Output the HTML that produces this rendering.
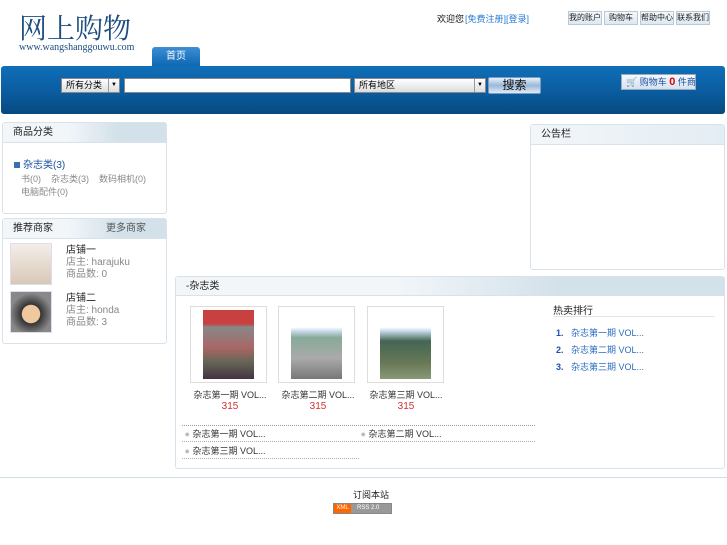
<!DOCTYPE html>
<html><head><meta charset="utf-8"><style>
*{margin:0;padding:0;box-sizing:border-box;white-space:nowrap}
body{width:727px;height:545px;position:relative;background:#fff;font-family:"Liberation Sans","Noto Sans CJK SC",sans-serif;font-size:10px;color:#333;overflow:hidden}
.a{position:absolute}
.btn{position:absolute;top:11px;height:14px;width:34px;border:1px solid #b8c8d8;background:linear-gradient(#f4f8fb,#dde8f0);font-size:8px;text-align:center;line-height:12px;color:#222;overflow:hidden}
.box{position:absolute;border:1px solid #d8e2ea;border-radius:3px;background:#fff}
.hd{height:20px;background:linear-gradient(90deg,#f2f6f9 40%,#d3e1ea 70%);border-bottom:1px solid #d8e2ea;padding-left:10px;line-height:20px;font-size:10px;color:#222}
.g{color:#888}
.dot{border-bottom:1px dotted #aab}
</style></head><body>
<div class="a" style="left:19px;top:10px;font-family:'Noto Serif CJK SC',serif;font-size:28px;color:#1d4d7e;line-height:34px">网上购物</div>
<div class="a" style="left:19px;top:42px;font-family:'Liberation Serif',serif;font-size:10px;color:#1d4d7e">www.wangshanggouwu.com</div>
<div class="a" style="left:437px;top:12px;font-size:9px;color:#111">欢迎您</div>
<div class="a" style="left:465px;top:12px;font-size:9px;color:#2a7ad0">[免费注册]</div>
<div class="a" style="left:506px;top:12px;font-size:9px;color:#2a7ad0">[登录]</div>
<div class="btn" style="left:568px">我的账户</div>
<div class="btn" style="left:604px">购物车</div>
<div class="btn" style="left:640px">帮助中心</div>
<div class="btn" style="left:676px">联系我们</div>
<div class="a" style="left:152px;top:47px;width:48px;height:20px;background:linear-gradient(#3d8ed4,#0b66b0);border-radius:3px 3px 0 0;color:#fff;text-align:center;line-height:20px;font-size:10px">首页</div>
<div class="a" style="left:1px;top:66px;width:724px;height:48px;background:linear-gradient(#0f6fb8,#0a5a9c 60%,#07497f);border-radius:3px"></div>
<div class="a" style="left:61px;top:78px;width:59px;height:15px;background:linear-gradient(#fff,#ddd);border:1px solid #888;font-size:9px;line-height:13px;padding-left:4px;color:#000">所有分类<span style="position:absolute;right:0;top:0;width:11px;height:13px;border-left:1px solid #999;text-align:center;font-size:6px">▼</span></div>
<div class="a" style="left:124px;top:78px;width:227px;height:15px;background:#fff;border:1px solid #888"></div>
<div class="a" style="left:354px;top:78px;width:132px;height:15px;background:linear-gradient(#fff,#ddd);border:1px solid #888;font-size:9px;line-height:13px;padding-left:4px;color:#000">所有地区<span style="position:absolute;right:0;top:0;width:11px;height:13px;border-left:1px solid #999;text-align:center;font-size:6px">▼</span></div>
<div class="a" style="left:488px;top:77px;width:53px;height:17px;background:linear-gradient(#e8f0f8,#9ab8d8 50%,#e0ecf8);border:1px solid #7a9cc0;border-radius:2px;text-align:center;font-size:12px;line-height:15px;color:#111">搜索</div>
<div class="a" style="left:621px;top:74px;width:75px;height:16px;background:linear-gradient(#f4f8fc,#d4e2f0);border:1px solid #9ab;font-size:9px;line-height:14px;color:#1a4fa0;padding-left:4px;overflow:hidden">🛒 购物车 <b style="color:#d00;font-size:11px">0</b> 件商品</div>

<div class="box" style="left:2px;top:122px;width:165px;height:92px">
<div class="hd">商品分类</div>
<div class="a" style="left:11px;top:33px;color:#1a4fa0;font-size:10px"><span style="display:inline-block;width:6px;height:6px;background:#3a70b0;margin-right:3px"></span>杂志类(3)</div>
<div class="a g" style="left:18px;top:49px;font-size:9px">书(0)&nbsp;&nbsp;&nbsp;&nbsp;杂志类(3)&nbsp;&nbsp;&nbsp;&nbsp;数码相机(0)</div>
<div class="a g" style="left:18px;top:62px;font-size:9px">电脑配件(0)</div>
</div>
<div class="box" style="left:2px;top:218px;width:165px;height:126px">
<div class="hd">推荐商家<span style="position:absolute;right:20px;color:#555">更多商家</span></div>
<div class="a" style="left:7px;top:24px;width:42px;height:42px;border:1px solid #dde;background:linear-gradient(#f4eee8,#d8c8b8)"></div>
<div class="a" style="left:63px;top:26px;line-height:12px"><span style="color:#222">店铺一</span><br><span class="g">店主: harajuku</span><br><span class="g">商品数: 0</span></div>
<div class="a" style="left:7px;top:72px;width:42px;height:42px;border:1px solid #dde;background:radial-gradient(circle at 50% 55%,#f0c8a0 30%,#333 32%,#888 70%)"></div>
<div class="a" style="left:63px;top:74px;line-height:12px"><span style="color:#222">店铺二</span><br><span class="g">店主: honda</span><br><span class="g">商品数: 3</span></div>
</div>
<div class="box" style="left:530px;top:124px;width:195px;height:146px"><div class="hd" style="background:linear-gradient(90deg,#f2f6f9,#e4edf3)">公告栏</div></div>

<div class="box" style="left:175px;top:276px;width:550px;height:193px">
<div class="hd" style="height:19px">-杂志类</div>
<div class="a" style="left:14px;top:29px;width:77px;height:77px;border:1px solid #e0dcd8;padding:3px 12px"><div style="width:100%;height:100%;background:linear-gradient(#c84040 20%,#888 25%,#a66 55%,#665 75%,#434 100%)"></div></div>
<div class="a" style="left:102px;top:29px;width:77px;height:77px;border:1px solid #e0dcd8;padding:3px 12px"><div style="width:100%;height:100%;background:linear-gradient(#fff 25%,#cde 30%,#8a9 40%,#aaa 70%,#777 100%)"></div></div>
<div class="a" style="left:191px;top:29px;width:77px;height:77px;border:1px solid #e0dcd8;padding:3px 12px"><div style="width:100%;height:100%;background:linear-gradient(#fff 25%,#cde 30%,#465 45%,#675 75%,#897 100%)"></div></div>
<div class="a" style="left:14px;top:113px;text-align:center;width:80px;line-height:11px;font-size:9px">杂志第一期 VOL...<br><span style="color:#c33;font-size:10px">315</span></div>
<div class="a" style="left:102px;top:113px;text-align:center;width:80px;line-height:11px;font-size:9px">杂志第二期 VOL...<br><span style="color:#c33;font-size:10px">315</span></div>
<div class="a" style="left:190px;top:113px;text-align:center;width:80px;line-height:11px;font-size:9px">杂志第三期 VOL...<br><span style="color:#c33;font-size:10px">315</span></div>
<div class="a" style="left:6px;top:148px;width:353px;border-top:1px dotted #99a"></div>
<div class="a dot" style="left:6px;top:150px;width:177px;height:15px;line-height:15px;font-size:9px">&nbsp;<span style="color:#bbb">●</span> 杂志第一期 VOL...</div>
<div class="a dot" style="left:182px;top:150px;width:177px;height:15px;line-height:15px;font-size:9px">&nbsp;<span style="color:#bbb">●</span> 杂志第二期 VOL...</div>
<div class="a dot" style="left:6px;top:167px;width:177px;height:15px;line-height:15px;font-size:9px">&nbsp;<span style="color:#bbb">●</span> 杂志第三期 VOL...</div>
<div class="a" style="left:377px;top:25px;width:162px;height:15px;border-bottom:1px solid #dde6ee;color:#222">热卖排行</div>
<div class="a" style="left:380px;top:48px;line-height:17px;color:#2a6cc0;font-size:9px"><b style="color:#2050b0">1.</b>&nbsp;&nbsp; 杂志第一期 VOL...<br><b style="color:#2050b0">2.</b>&nbsp;&nbsp; 杂志第二期 VOL...<br><b style="color:#2050b0">3.</b>&nbsp;&nbsp; 杂志第三期 VOL...</div>
</div>
<div class="a" style="left:0;top:477px;width:727px;border-top:1px solid #cde0e6"></div>
<div class="a" style="left:353px;top:490px;font-size:9px;line-height:11px;color:#222">订阅本站</div>
<div class="a" style="left:333px;top:503px;width:59px;height:11px;border:1px solid #888;background:#999;font-size:6px;color:#fff;line-height:9px"><span style="background:#f60;display:inline-block;width:17px;text-align:center">XML</span><span style="padding-left:6px">RSS 2.0</span></div>
</body></html>
